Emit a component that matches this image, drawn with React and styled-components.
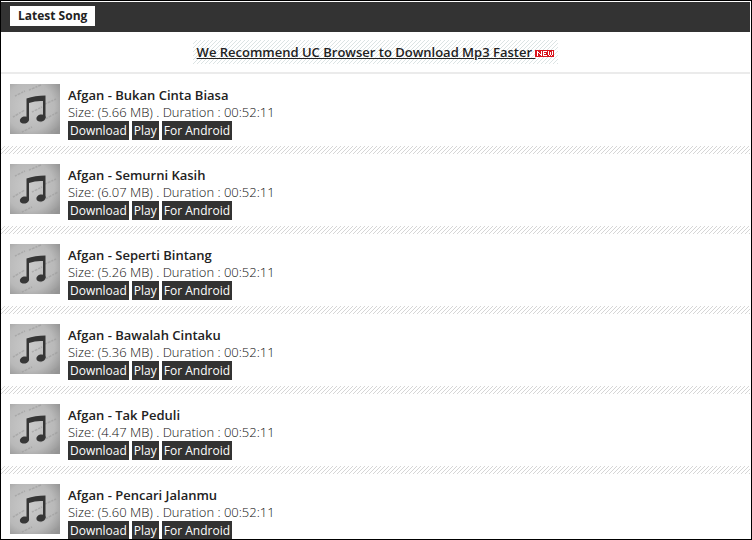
import styled, { createGlobalStyle } from 'styled-components'

const songs = [
  { id: 1, title: 'Afgan - Bukan Cinta Biasa', size: '5.66 MB', duration: '00:52:11' },
  { id: 2, title: 'Afgan - Semurni Kasih', size: '6.07 MB', duration: '00:52:11' },
  { id: 3, title: 'Afgan - Seperti Bintang', size: '5.26 MB', duration: '00:52:11' },
  { id: 4, title: 'Afgan - Bawalah Cintaku', size: '5.36 MB', duration: '00:52:11' },
  { id: 5, title: 'Afgan - Tak Peduli', size: '4.47 MB', duration: '00:52:11' },
  { id: 6, title: 'Afgan - Pencari Jalanmu', size: '5.60 MB', duration: '00:52:11' },
]

// 4x4 diagonal hatch tile
const hatch = (color) =>
  `url("data:image/svg+xml,%3Csvg xmlns='http://www.w3.org/2000/svg' width='4' height='4' shape-rendering='crispEdges'%3E%3Cpath fill='%23${color}' d='M3 0h1v1h-1zM2 1h1v1h-1zM1 2h1v1h-1zM0 3h1v1h-1z'/%3E%3C/svg%3E")`

function Cover() {
  return (
    <CoverArt viewBox="0 0 50 50" aria-hidden="true">
      <defs>
        <radialGradient id="paper" cx="40%" cy="45%" r="75%">
          <stop offset="0" stopColor="#cacaca" />
          <stop offset="0.65" stopColor="#b9b9b9" />
          <stop offset="1" stopColor="#949494" />
        </radialGradient>
      </defs>
      <rect width="50" height="50" fill="url(#paper)" />
      <g stroke="#999" strokeWidth="1.5" strokeDasharray="2 1 3 1" opacity="0.55">
        <path d="M5 12L15 7M19 6L31 1M3 33L15 26M22 28L32 23M35 20L46 15M30 38L48 28M12 48L22 43M41 48L49 43" />
      </g>
      <g fill="#363636">
        <path d="M16.500 14.500Q25 11.500 35.500 11.500V34H33V17Q26 16.500 19 19V36H16.500Z" />
        <ellipse cx="14.500" cy="36" rx="4.700" ry="3.500" transform="rotate(-15 14.500 36)" />
        <ellipse cx="31" cy="34" rx="4.700" ry="3.500" transform="rotate(-15 31 34)" />
      </g>
    </CoverArt>
  )
}

function NewBadge() {
  return (
    <BadgeIcon viewBox="0 0 19 7" role="img" aria-label="New" shapeRendering="crispEdges">
      <rect width="19" height="7" fill="#d8141c" />
      <g fill="#fff">
        <path d="M2 1h1v5h-1zM3 2h1v1h-1zM4 3h1v1h-1zM5 4h1v1h-1zM6 1h1v5h-1z" />
        <path d="M8 1h4v1h-3v1h2v1h-2v1h3v1h-4z" />
        <path d="M13 1h1v4h-1zM14 5h1v1h-1zM15 2h1v3h-1zM16 5h1v1h-1zM17 1h1v4h-1z" />
      </g>
    </BadgeIcon>
  )
}

export default function App() {
  return (
    <>
      <GlobalStyle />
      <Frame>
        <Header>
          <Heading>Latest Song</Heading>
        </Header>
        <Notice>
          <NoticeLink href="#uc-browser">
            We Recommend UC Browser to Download Mp3 Faster <NewBadge />
          </NoticeLink>
        </Notice>
        <SongList>
          {songs.map((song) => (
            <SongItem key={song.id}>
              <Cover />
              <SongInfo>
                <SongTitle>{song.title}</SongTitle>
                <Meta>
                  Size: ({song.size}) . Duration : {song.duration}
                </Meta>
                <Actions>
                  <Action href={`#download-${song.id}`}>Download</Action>
                  <Action href={`#play-${song.id}`}>Play</Action>
                  <Action href={`#android-${song.id}`}>For Android</Action>
                </Actions>
              </SongInfo>
            </SongItem>
          ))}
        </SongList>
      </Frame>
    </>
  )
}

const GlobalStyle = createGlobalStyle`
* {
  box-sizing: border-box;
}
body {
  margin: 0;
  background: #fff;
  color: #333;
  font-family: 'Open Sans', 'Noto Sans', sans-serif;
  font-size: 13px;
}
`

const Frame = styled.main`
height: 100vh;
padding: 1px 1px 0 0;
border: 1px solid #000;
overflow: hidden;
`

const Header = styled.header`
display: flex;
align-items: center;
padding: 4px 9px 6px;
background: #333;
`

const Heading = styled.h1`
margin: 0;
padding: 0 8px;
background: #fff;
color: #222;
font-size: 12px;
font-weight: 700;
line-height: 20px;
`

const Notice = styled.div`
display: flex;
justify-content: center;
padding: 8px;
border-bottom: 2px solid #ebebeb;
`

const NoticeLink = styled.a`
padding: 2px 4px;
background: ${hatch('dce4e4')};
color: #222;
font-size: 13px;
font-weight: 600;
line-height: 20px;
`

const BadgeIcon = styled.svg`
width: 19px;
height: 7px;
`

const SongList = styled.ul`
margin: 0;
padding: 0;
list-style: none;
`

const SongItem = styled.li`
display: flex;
gap: 8px;
height: 80px;
padding: 10px 9px;
background: linear-gradient(#fff, #fff) left top / 100% 72px no-repeat, ${hatch('d6d6d6')};
`

const CoverArt = styled.svg`
flex: none;
width: 50px;
height: 50px;
`

const SongInfo = styled.div`
display: flex;
flex-direction: column;
padding-top: 2px;
`

const SongTitle = styled.h2`
margin: 0;
color: #222;
font-size: 13px;
font-weight: 600;
line-height: 18px;
`

const Meta = styled.p`
margin: 0;
color: #111;
font-size: 13px;
font-weight: 300;
line-height: 17px;
`

const Actions = styled.div`
display: flex;
gap: 3px;
`

const Action = styled.a`
padding: 0 2px;
background: #333;
color: #fff;
font-size: 12px;
line-height: 19px;
text-decoration: none;
`
